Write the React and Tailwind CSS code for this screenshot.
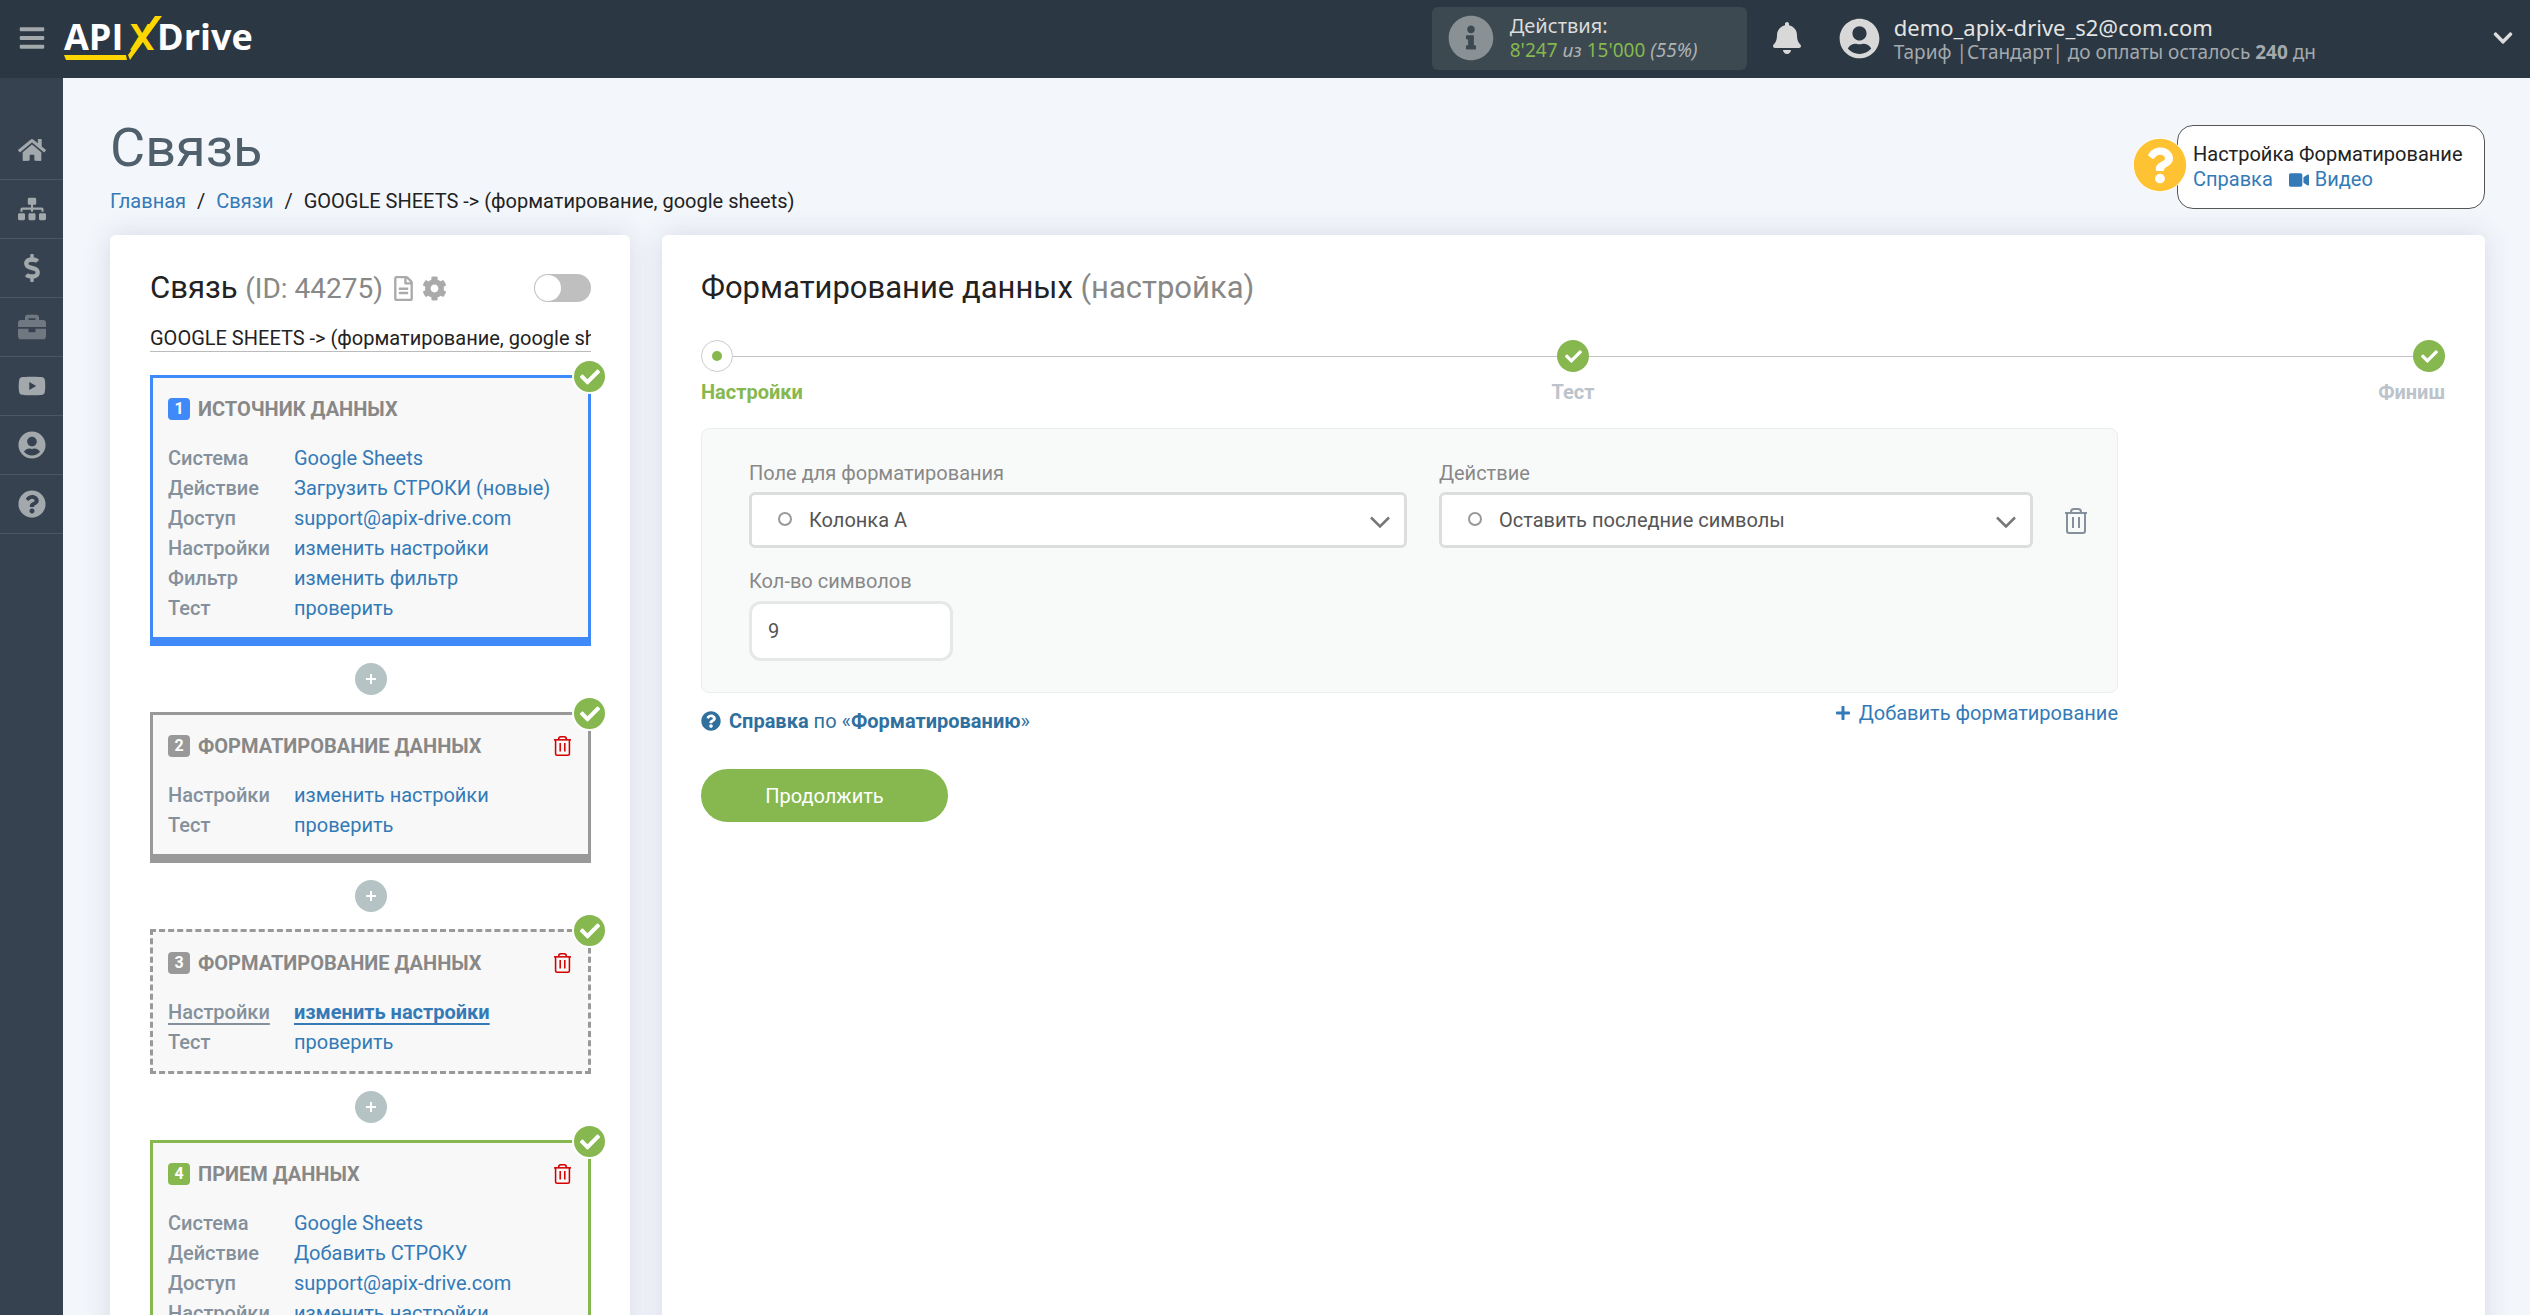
import { useState } from 'react'
import {
  FaBars, FaHome, FaSitemap, FaDollarSign, FaBriefcase, FaYoutube, FaUserCircle,
  FaQuestionCircle, FaInfoCircle, FaBell, FaChevronDown, FaRegFileAlt, FaCog,
  FaCheck, FaVideo, FaPlus,
} from 'react-icons/fa'

const navItems = [
  { label: 'Главная', icon: FaHome },
  { label: 'Связи', icon: FaSitemap },
  { label: 'Оплата', icon: FaDollarSign },
  { label: 'Проекты', icon: FaBriefcase, dim: true },
  { label: 'Видео', icon: FaYoutube },
  { label: 'Профиль', icon: FaUserCircle },
  { label: 'Справка', icon: FaQuestionCircle },
]

const blocks = [
  {
    id: 1, title: 'ИСТОЧНИК ДАННЫХ', tone: 'blue',
    rows: [
      ['Система', 'Google Sheets'],
      ['Действие', 'Загрузить СТРОКИ (новые)'],
      ['Доступ', 'support@apix-drive.com'],
      ['Настройки', 'изменить настройки'],
      ['Фильтр', 'изменить фильтр'],
      ['Тест', 'проверить'],
    ],
  },
  {
    id: 2, title: 'ФОРМАТИРОВАНИЕ ДАННЫХ', tone: 'gray', removable: true,
    rows: [['Настройки', 'изменить настройки'], ['Тест', 'проверить']],
  },
  {
    id: 3, title: 'ФОРМАТИРОВАНИЕ ДАННЫХ', tone: 'dashed', removable: true, active: 'Настройки',
    rows: [['Настройки', 'изменить настройки'], ['Тест', 'проверить']],
  },
  {
    id: 4, title: 'ПРИЕМ ДАННЫХ', tone: 'green', removable: true,
    rows: [
      ['Система', 'Google Sheets'],
      ['Действие', 'Добавить СТРОКУ'],
      ['Доступ', 'support@apix-drive.com'],
      ['Настройки', 'изменить настройки'],
      ['Тест', 'проверить'],
    ],
  },
]

const blockBorder = {
  blue: 'border-[3px] border-b-[9px] border-[#3f8af8]',
  gray: 'border-[3px] border-b-[9px] border-[#999]',
  dashed: 'border-[3px] border-dashed border-[#999]',
  green: 'border-[3px] border-b-[9px] border-[#86b84f]',
}

const blockBadge = {
  blue: 'bg-[#3f8af8]',
  gray: 'bg-[#999]',
  dashed: 'bg-[#999]',
  green: 'bg-[#86b84f]',
}

function Logo() {
  return (
    <svg viewBox="0 0 192 46" className="h-[46px] w-[192px] overflow-visible" role="img" aria-label="APIXDrive">
      <g fontFamily="Open Sans, sans-serif" fontWeight="700" fontSize="36">
        <text x="0" y="35" fill="#fff">API</text>
        <text x="66" y="35" fill="#ffd600">X</text>
        <text x="93" y="35" fill="#fff">Drive</text>
      </g>
      <path d="M91 1h7L68 42l-2 3-2-5z" fill="#ffd600" />
      <path d="M0 40h62l1 5H2z" fill="#ffd600" />
    </svg>
  )
}

function TrashIcon({ className }) {
  return (
    <svg viewBox="0 0 22 26" fill="none" stroke="currentColor" strokeWidth="2" className={className}>
      <path d="M0 5h22" />
      <path d="M6 5V4q0-3 3-3h4q3 0 3 3v1" />
      <path d="M2 5v18q0 2 2 2h14q2 0 2-2V5" />
      <path d="M8 9v11M14 9v11" />
    </svg>
  )
}

function Header() {
  return (
    <header className="flex h-[78px] shrink-0 items-center bg-[#2b3742] pr-4 pb-0.5 font-['Noto_Sans',sans-serif] text-xl leading-[25px]">
      <button type="button" aria-label="Меню" className="flex w-16 shrink-0 justify-center text-[#a2a8ab]">
        <FaBars className="h-7 w-auto" />
      </button>
      <a href="#"><Logo /></a>

      <div className="ml-auto flex h-[63px] w-[315px] items-center gap-4 rounded-md bg-[#3c4951] px-4 text-[#dcdcdc]">
        <FaInfoCircle className="h-[46px] w-auto text-[#8a9194]" />
        <div>
          <div>Действия:</div>
          <div className="text-[19px] leading-[25px] text-[#aeb2b4]">
            <span className="text-[#85b84e]">8'247</span> <i>из</i> <span className="text-[#85b84e]">15'000</span> <i>(55%)</i>
          </div>
        </div>
      </div>
      <button type="button" aria-label="Уведомления" className="ml-6 text-[#d8d8d8]">
        <FaBell className="h-8 w-auto" />
      </button>
      <div className="ml-9 flex items-center gap-3.5 pr-[176px]">
        <FaUserCircle className="h-[41px] w-auto text-[#d8d8d8]" />
        <div className="pt-1">
          <div className="text-[22px] leading-[25px] text-[#e4e4e4]">demo_apix-drive_s2@com.com</div>
          <div className="text-[19px] leading-[25px] text-[#a4a9ad]">Тариф |Стандарт| до оплаты осталось <b>240</b> дн</div>
        </div>
      </div>
      <button type="button" aria-label="Открыть меню профиля" className="text-[#dcdcdc]">
        <FaChevronDown className="h-[22px] w-auto" />
      </button>
    </header>
  )
}

function Sidebar() {
  return (
    <nav className="w-[63px] shrink-0 bg-[#36424f] pt-[43px]">
      {navItems.map(({ label, icon: Icon, dim }) => (
        <a
          key={label}
          href="#"
          aria-label={label}
          className={`flex h-[59px] items-center justify-center border-b border-[#4b5763] ${dim ? 'text-[#6f7781]' : 'text-[#a2a8ab]'}`}
        >
          <Icon className="h-7 w-auto" />
        </a>
      ))}
    </nav>
  )
}

function PageHead() {
  return (
    <div className="flex items-start justify-between">
      <div>
        <h1 className="text-[54px] leading-[60px] text-[#4f5f6b]">Связь</h1>
        <div className="mt-2 flex gap-[11px] leading-[30px] text-[#222]">
          <a href="#" className="text-[#337ab7]">Главная</a>
          <span>/</span>
          <a href="#" className="text-[#337ab7]">Связи</a>
          <span>/</span>
          <span>GOOGLE SHEETS -&gt; (форматирование, google sheets)</span>
        </div>
      </div>
      <div className="relative mt-[7px] flex h-[84px] w-[308px] flex-col justify-center rounded-2xl border border-[#555] bg-white px-[15px] leading-[25px] text-[#222]">
        <div className="absolute top-3 -left-[45px] rounded-full bg-white text-[#ffc233]">
          <FaQuestionCircle className="size-[54px]" />
        </div>
        <div>Настройка Форматирование</div>
        <div className="flex gap-4 text-[#337ab7]">
          <a href="#">Справка</a>
          <a href="#" className="flex items-center gap-1.5"><FaVideo className="h-5 w-auto" />Видео</a>
        </div>
      </div>
    </div>
  )
}

function Block({ block }) {
  return (
    <div className={`relative bg-[#f8f8f8] px-[15px] pt-4 pb-3.5 ${blockBorder[block.tone]}`}>
      <div className="absolute -top-[19px] -right-[19px] flex size-[35px] items-center justify-center rounded-full border-2 border-white bg-[#86b84f] text-white">
        <FaCheck size={20} />
      </div>
      <div className="mb-[19px] flex h-[30px] items-center">
        <span className={`flex size-[22px] items-center justify-center rounded text-base font-bold text-white ${blockBadge[block.tone]}`}>{block.id}</span>
        <h3 className="ml-2 font-bold text-[#888]">{block.title}</h3>
        {block.removable && (
          <button type="button" aria-label="Удалить" className="mr-0.5 ml-auto text-[#d40000]">
            <TrashIcon className="h-5 w-[17px]" />
          </button>
        )}
      </div>
      <div className="grid grid-cols-[126px_auto] justify-start leading-[30px]">
        {block.rows.map(([label, value]) => (
          <div key={label} className="contents">
            <span className={`font-medium text-[#84909b] ${block.active === label ? 'underline underline-offset-4' : ''}`}>{label}</span>
            <a href="#" className={`text-[#337ab7] ${block.active === label ? 'font-bold underline underline-offset-4' : ''}`}>{value}</a>
          </div>
        ))}
      </div>
    </div>
  )
}

function ConnectionPanel() {
  const [name, setName] = useState('GOOGLE SHEETS -> (форматирование, google sheets)')
  const [enabled, setEnabled] = useState(false)

  return (
    <section className="w-[520px] shrink-0 rounded-md bg-white pt-8 pr-[39px] pb-10 pl-10 shadow-[0_0_28px_rgba(50,60,80,0.14)]">
      <div className="flex h-[42px] items-center">
        <h2 className="text-[31px] text-[#222]">Связь <span className="text-[28px] text-[#888]">(ID: 44275)</span></h2>
        <button type="button" aria-label="Журнал" className="ml-2 text-[#aaa]"><FaRegFileAlt className="h-[25px] w-auto" /></button>
        <button type="button" aria-label="Настройки связи" className="ml-1.5 text-[#aaa]"><FaCog className="size-[25px]" /></button>
        <label className="relative ml-auto h-7 w-[57px] cursor-pointer">
          <input type="checkbox" aria-label="Включить связь" checked={enabled} onChange={e => setEnabled(e.target.checked)} className="peer sr-only" />
          <span className="block h-full rounded-full bg-[#bfbfbf] p-px peer-checked:bg-[#86b84f]">
            <span className="block size-[26px] rounded-full bg-white" />
          </span>
        </label>
      </div>
      <input
        type="text"
        aria-label="Название связи"
        value={name}
        onChange={e => setName(e.target.value)}
        className="mt-3 mb-[23px] block h-[31px] w-full border-b border-[#bbb] pt-1 text-[#222] outline-none"
      />
      {blocks.map((block, i) => (
        <div key={block.id}>
          {i > 0 && (
            <button type="button" aria-label="Добавить блок" className="mx-auto my-[17px] flex size-8 items-center justify-center rounded-full bg-[#b5c3c4] text-white">
              <svg viewBox="0 0 10 10" className="size-2.5" stroke="currentColor" strokeWidth="2"><path d="M5 0v10M0 5h10" /></svg>
            </button>
          )}
          <Block block={block} />
        </div>
      ))}
    </section>
  )
}

function StepDot({ current }) {
  if (current) {
    return <div className="flex size-8 items-center justify-center rounded-full border border-[#ccc]"><div className="size-2.5 rounded-full bg-[#86b84f]" /></div>
  }
  return <div className="flex size-8 items-center justify-center rounded-full bg-[#86b84f] text-white"><FaCheck size={17} /></div>
}

function Stepper() {
  return (
    <div className="mt-[31px] font-bold text-[#bcc3cb]">
      <div className="flex items-center">
        <StepDot current />
        <div className="h-px flex-1 bg-[#c4c4c4]" />
        <StepDot />
        <div className="h-px flex-1 bg-[#c4c4c4]" />
        <StepDot />
      </div>
      <div className="mt-[5px] grid grid-cols-3 leading-[30px]">
        <span className="text-[#86b84f]">Настройки</span>
        <span className="text-center">Тест</span>
        <span className="text-right">Финиш</span>
      </div>
    </div>
  )
}

function SelectField({ id, label, options }) {
  return (
    <div>
      <label htmlFor={id} className="block leading-[30px] text-[#888]">{label}</label>
      <div className="relative mt-1">
        <select id={id} className="h-14 w-full appearance-none rounded-md border-[3px] border-[#ddd] bg-white pr-12 pl-[57px] text-[#555] outline-none">
          {options.map(o => <option key={o}>{o}</option>)}
        </select>
        <span className="pointer-events-none absolute top-5 left-[29px] size-3.5 rounded-full border-2 border-[#999]" />
        <svg viewBox="0 0 20 12" className="pointer-events-none absolute top-6 right-[17px] w-5" fill="none" stroke="#777" strokeWidth="2.5">
          <path d="M1 1.500l9 9 9-9" />
        </svg>
      </div>
    </div>
  )
}

function SettingsPanel() {
  const [count, setCount] = useState('9')

  return (
    <section className="flex-1 rounded-md bg-white pt-8 pr-10 pb-10 pl-[39px] shadow-[0_0_28px_rgba(50,60,80,0.14)]">
      <h2 className="text-[31px] leading-[42px] text-[#222]">Форматирование данных <span className="text-[#888]">(настройка)</span></h2>
      <Stepper />

      <div className="mt-[21px] w-13/16">
        <div className="rounded-lg border border-[#ebeeed] bg-[#f8faf9] pt-[29px] pr-7 pb-[31px] pl-[47px]">
          <div className="grid grid-cols-[659fr_595fr_24px] gap-x-8">
            <SelectField id="field" label="Поле для форматирования" options={['Колонка A', 'Колонка B', 'Колонка C']} />
            <SelectField id="action" label="Действие" options={['Оставить последние символы', 'Оставить первые символы']} />
            <button type="button" aria-label="Удалить форматирование" className="mt-[50px] h-[26px] text-[#84909b]">
              <TrashIcon className="h-[26px] w-[22px]" />
            </button>
          </div>
          <label htmlFor="count" className="mt-[18px] block leading-[30px] text-[#888]">Кол-во символов</label>
          <input
            id="count"
            type="text"
            value={count}
            onChange={e => setCount(e.target.value)}
            className="mt-[5px] block h-[60px] w-[204px] rounded-xl border-[3px] border-[#e6e7e7] bg-white px-4 text-[#555] outline-none"
          />
        </div>
        <div className="flex items-start justify-between pt-[5px] leading-[30px] text-[#337ab7]">
          <a href="#" className="mt-2 flex items-center gap-2 text-[#2f709f]">
            <FaQuestionCircle size={20} />
            <span><b>Справка</b> по «<b>Форматированию</b>»</span>
          </a>
          <button type="button" className="flex items-center gap-2"><FaPlus size={16} />Добавить форматирование</button>
        </div>
      </div>

      <button type="button" className="mt-[33px] h-[53px] w-[247px] rounded-full bg-[#86b84f] text-white">Продолжить</button>
    </section>
  )
}

export default function App() {
  return (
    <div className="flex h-screen flex-col font-[Roboto,sans-serif] text-xl">
      <Header />
      <div className="flex min-h-0 flex-1">
        <Sidebar />
        <main className="flex min-w-0 flex-1 flex-col overflow-y-auto bg-[#f3f6fb] pt-10 pr-[45px] pl-[47px] [scrollbar-width:none]">
          <PageHead />
          <div className="mt-[19px] flex flex-1 gap-8">
            <ConnectionPanel />
            <SettingsPanel />
          </div>
        </main>
      </div>
    </div>
  )
}
